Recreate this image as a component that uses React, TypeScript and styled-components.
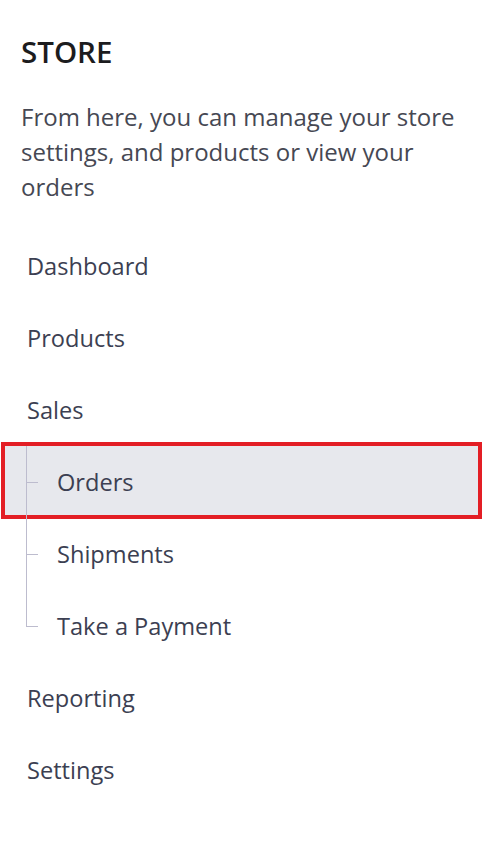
import React from "react";
import styled, { createGlobalStyle } from "styled-components";

const GlobalStyle = createGlobalStyle`
  html, body {
    margin: 0;
    padding: 0;
    background: #ffffff;
  }
  body {
    font-family: "Open Sans", "Noto Sans", Arial, sans-serif;
    -webkit-font-smoothing: antialiased;
  }
`;

const Page = styled.div`
  width: 483px;
  min-height: 847px;
  box-sizing: border-box;
  background: #ffffff;
`;

const Header = styled.header`
  padding: 31px 20px 0 21px;
`;

const Title = styled.h2`
  margin: 0;
  font-size: 29.5px;
  font-weight: 600;
  line-height: normal;
  color: #1c1c1e;
`;

const Description = styled.p`
  margin: 27px 0 0;
  font-size: 24px;
  line-height: 35px;
  color: #464853;
`;

const Nav = styled.nav`
  margin: 26px 1px 0;
  display: flex;
  flex-direction: column;
`;

const Item = styled.a<{ $sub?: boolean; $active?: boolean }>`
  position: relative;
  display: flex;
  align-items: center;
  height: 72px;
  padding-left: ${(p) => (p.$sub ? "56px" : "26px")};
  font-size: 23.6px;
  color: #3c3f52;
  text-decoration: none;
  background: ${(p) => (p.$active ? "#e7e8ed" : "transparent")};

  ${(p) =>
    p.$active &&
    `
    &::after {
      content: "";
      position: absolute;
      top: -4px;
      bottom: -1px;
      left: 0;
      right: 0;
      border: 4px solid #e31e25;
      pointer-events: none;
    }
  `}

  ${(p) =>
    p.$sub &&
    `
    &::before {
      content: "";
      position: absolute;
      left: 25px;
      top: 36px;
      width: 12px;
      height: 1px;
      background: #bdbcce;
    }
  `}
`;

const SubList = styled.div`
  position: relative;
  display: flex;
  flex-direction: column;

  &::before {
    content: "";
    position: absolute;
    left: 25px;
    top: 0;
    bottom: 35px;
    width: 1px;
    background: #bdbcce;
    z-index: 1;
  }
`;

export default function App() {
  return (
    <Page>
      <GlobalStyle />
      <Header>
        <Title>STORE</Title>
        <Description>
          From here, you can manage your store settings, and products or view
          your orders
        </Description>
      </Header>
      <Nav>
        <Item href="#">Dashboard</Item>
        <Item href="#">Products</Item>
        <Item href="#">Sales</Item>
        <SubList>
          <Item href="#" $sub $active>
            Orders
          </Item>
          <Item href="#" $sub>
            Shipments
          </Item>
          <Item href="#" $sub>
            Take a Payment
          </Item>
        </SubList>
        <Item href="#">Reporting</Item>
        <Item href="#">Settings</Item>
      </Nav>
    </Page>
  );
}
